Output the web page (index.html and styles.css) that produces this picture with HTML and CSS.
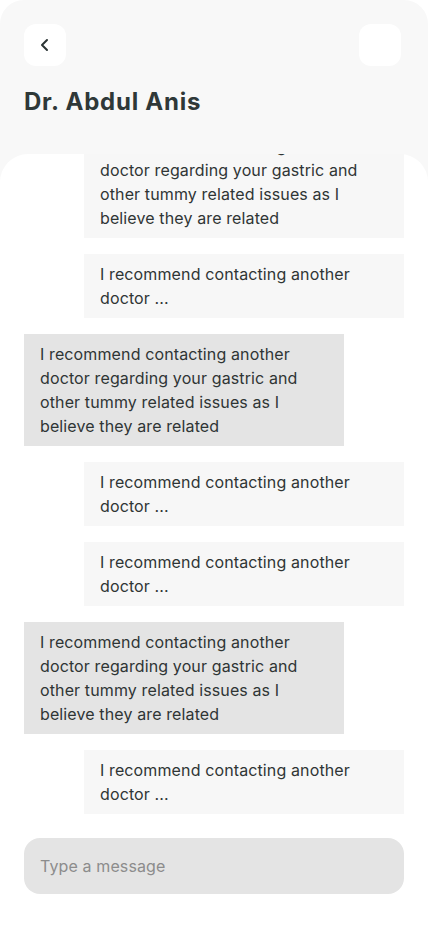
FILE: index.html
```html
<!DOCTYPE html>
<html lang="en">
<head>
<meta charset="utf-8">
<title>Dr. Abdul Anis</title>
<link rel="stylesheet" href="styles.css">
</head>
<body>
<div class="screen">
  <header class="header">
    <div class="top-bar">
      <button class="icon-btn" aria-label="Back">
        <svg width="12" height="14" viewBox="0 0 12 14"><path d="M8 2 L3 7 L8 12" fill="none" stroke="#2b3434" stroke-width="2" stroke-linecap="round" stroke-linejoin="round"/></svg>
      </button>
      <button class="icon-btn more" aria-label="More"></button>
    </div>
    <h1 class="title">Dr. Abdul Anis</h1>
  </header>
  <main class="panel">
    <div class="messages">
      <div class="bubble out">I recommend contacting another doctor regarding your gastric and other tummy related issues as I believe they are related</div>
      <div class="bubble out">I recommend contacting another doctor ...</div>
      <div class="bubble in">I recommend contacting another doctor regarding your gastric and other tummy related issues as I believe they are related</div>
      <div class="bubble out">I recommend contacting another doctor ...</div>
      <div class="bubble out">I recommend contacting another doctor ...</div>
      <div class="bubble in">I recommend contacting another doctor regarding your gastric and other tummy related issues as I believe they are related</div>
      <div class="bubble out">I recommend contacting another doctor ...</div>
    </div>
    <div class="composer">
      <input class="input" type="text" placeholder="Type a message">
    </div>
  </main>
</div>
</body>
</html>
```
FILE: styles.css
```css
* { box-sizing: border-box; }
html, body { margin: 0; padding: 0; background: #ffffff; }
body { font-family: "Inter", "Lato", sans-serif; color: #2f3838; }
.screen {
  height: 926px;
  display: flex;
  flex-direction: column;
  background: #f8f8f8;
  border-radius: 24px 24px 0 0;
  overflow: hidden;
}
.header { padding: 24px 27px 0 24px; }
.top-bar { display: flex; justify-content: space-between; }
.icon-btn {
  width: 42px; height: 42px;
  border: 0; border-radius: 12px;
  background: #ffffff;
  display: flex; align-items: center; justify-content: center;
  padding: 0;
}
.title {
  margin: 21px 0 0;
  font-family: "Inter", sans-serif;
  font-weight: 700;
  font-size: 24px;
  line-height: 30px;
  letter-spacing: 0.75px;
  color: #2f3838;
}
.panel {
  flex: 1;
  min-height: 0;
  margin-top: 37px;
  background: #ffffff;
  border-radius: 28px 28px 0 0;
  display: flex;
  flex-direction: column;
}
.messages {
  flex: 1;
  min-height: 0;
  overflow: hidden;
  display: flex;
  flex-direction: column;
  justify-content: flex-end;
  gap: 16px;
  padding: 0 24px;
}
.bubble {
  flex-shrink: 0;
  width: 320px;
  padding: 8px 16px;
  font-size: 16px;
  line-height: 24px;
  letter-spacing: 0.12px;
  color: #2f3535;
}
.bubble.out { align-self: flex-end; background: #f7f7f7; }
.bubble.in { align-self: flex-start; background: #e4e4e4; }
.composer { padding: 24px 24px 32px; }
.input {
  width: 100%;
  height: 56px;
  border: 0;
  border-radius: 16px;
  background: #e4e4e4;
  padding: 0 16px;
  font-family: "Inter", sans-serif;
  font-size: 16px;
  letter-spacing: 0.12px;
  color: #2f3535;
  outline: none;
}
.input::placeholder { color: #8c8c8c; }
```
